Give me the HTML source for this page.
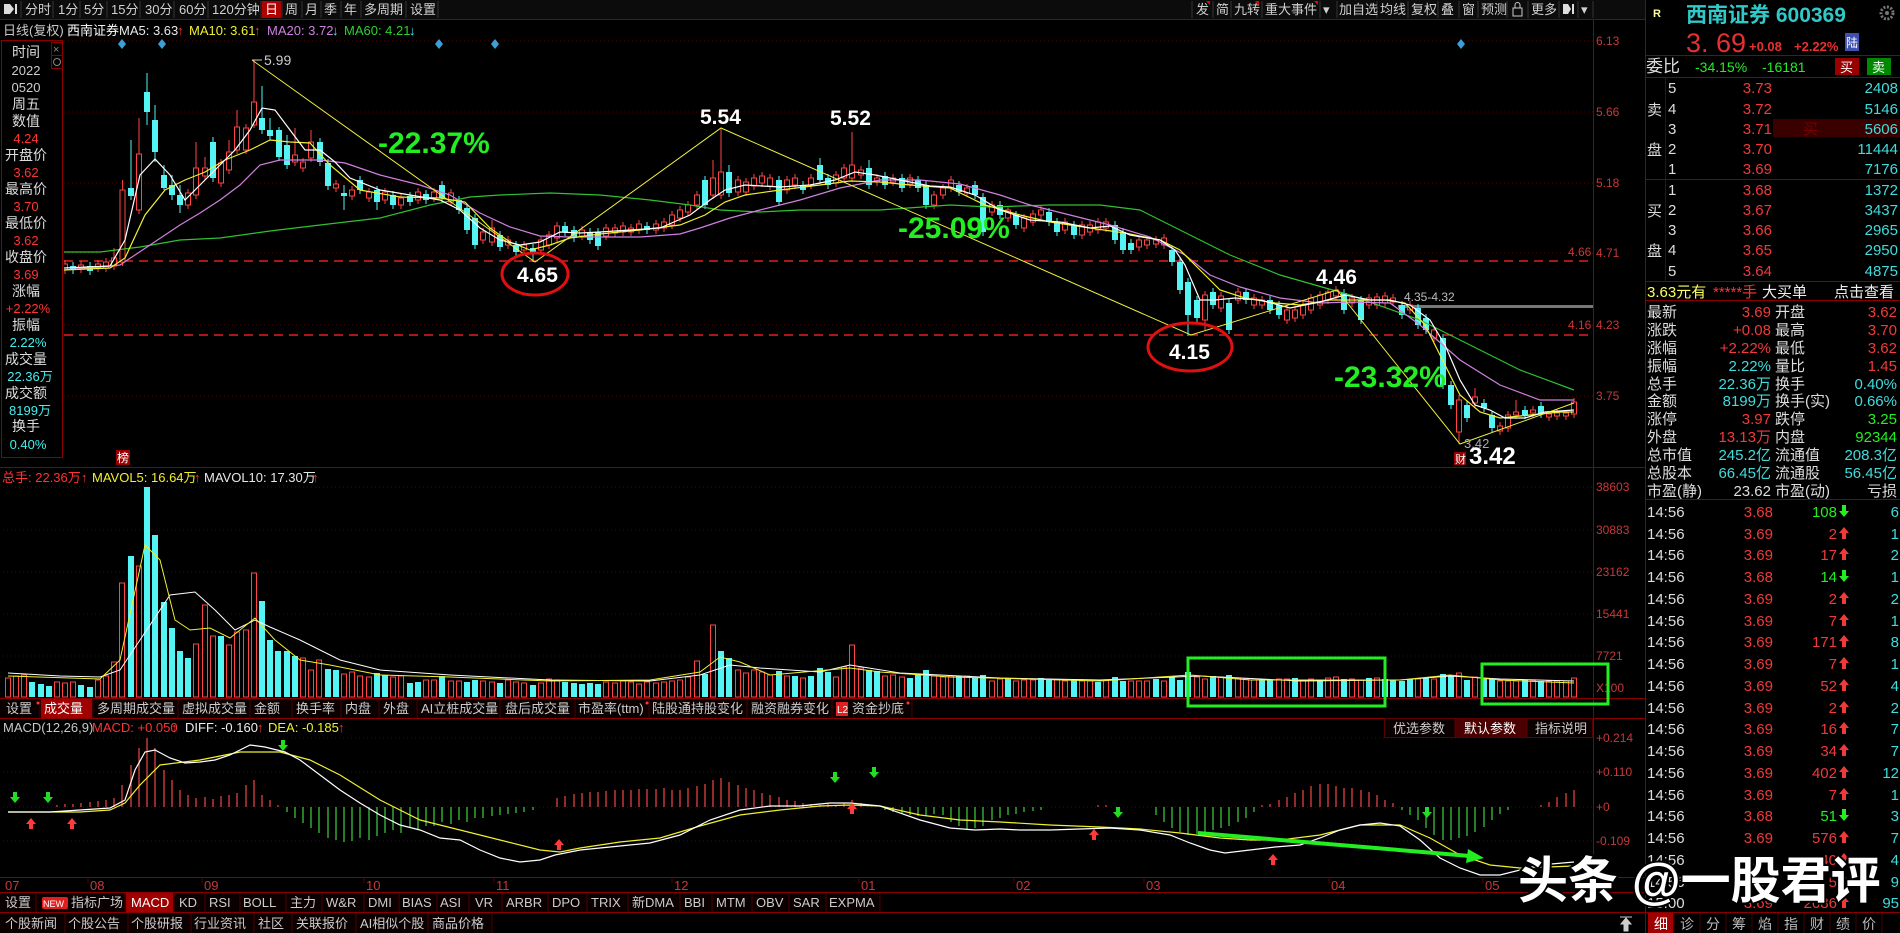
<!DOCTYPE html>
<html><head><meta charset="utf-8">
<style>
html,body{margin:0;padding:0;background:#000;overflow:hidden}
svg{display:block}
text{font-family:"Liberation Sans","Noto Sans CJK SC",sans-serif}
</style></head>
<body>
<svg width="1900" height="933" viewBox="0 0 1900 933" xmlns="http://www.w3.org/2000/svg">
<defs>
<clipPath id="cm"><rect x="64" y="40" width="1529" height="427"/></clipPath>
</defs>
<rect width="1900" height="933" fill="#000"/>

<!-- toolbar -->
<g font-size="13" fill="#d0d0d0">
<rect x="0" y="0" width="1645" height="19" fill="#0c0c0c"/>
<path d="M4 4h6l4 5-4 5H4z" fill="#ddd"/><rect x="15" y="4" width="2" height="10" fill="#ddd"/>
<rect x="262" y="1" width="19" height="17" fill="#b00000"/>
<g stroke="#333"><path d="M21 1v17M53 1v17M80 1v17M107 1v17M140 1v17M174 1v17M208 1v17M261 1v17M282 1v17M302 1v17M321 1v17M341 1v17M361 1v17M406 1v17M438 1v17"/>
<path d="M1192 1v17M1213 1v17M1231 1v17M1262 1v17M1320 1v17M1337 1v17M1377 1v17M1408 1v17M1438 1v17M1459 1v17M1478 1v17M1507 1v17M1528 1v17M1559 1v17M1578 1v17M1593 1v17"/></g>
<text x="25" y="14">分时</text><text x="58" y="14">1分</text><text x="84" y="14">5分</text><text x="111" y="14">15分</text><text x="145" y="14">30分</text><text x="179" y="14">60分</text><text x="212" y="14">120分钟</text>
<text x="265" y="14" fill="#fff">日</text><text x="285" y="14">周</text><text x="305" y="14">月</text><text x="324" y="14">季</text><text x="344" y="14">年</text><text x="364" y="14">多周期</text><text x="410" y="14">设置</text>
<text x="1196" y="14">发</text><text x="1216" y="14">简</text><text x="1234" y="14">九转</text><text x="1265" y="14">重大事件</text><text x="1323" y="14">▾</text>
<text x="1339" y="14">加自选</text><text x="1380" y="14">均线</text><text x="1411" y="14">复权</text><text x="1441" y="14">叠</text><text x="1462" y="14">窗</text><text x="1481" y="14">预测</text>
<rect x="1513" y="8" width="9" height="8" fill="none" stroke="#ccc"/><path d="M1515 8v-3a2.5 2.5 0 0 1 5 0v3" fill="none" stroke="#ccc"/>
<text x="1531" y="14">更多</text><path d="M1563 4h5l3 5-3 5h-5z" fill="#ddd"/><rect x="1572" y="4" width="2" height="10" fill="#ddd"/><text x="1581" y="14">▾</text>
<path d="M1210 1l-4 0 4 4z M1259 1l-4 0 4 4z M1318 1l-4 0 4 4z" fill="#e00"/>
</g>
<rect x="0" y="19" width="1645" height="1" fill="#8a0000"/>

<!-- info line -->
<g font-size="13">
<text x="3" y="35" fill="#c8c8c8">日线(复权)</text>
<text x="67" y="35" fill="#fff">西南证券</text>
<text x="119" y="35" fill="#e8e8e8">MA5: 3.63</text><text x="177" y="35" fill="#f33">↑</text>
<text x="189" y="35" fill="#f0f030">MA10: 3.61</text><text x="254" y="35" fill="#f33">↑</text>
<text x="267" y="35" fill="#d080e0">MA20: 3.72</text><text x="332" y="35" fill="#4ee">↓</text>
<text x="344" y="35" fill="#30d030">MA60: 4.21</text><text x="409" y="35" fill="#4ee">↓</text>
</g>

<!-- grids -->
<g stroke="#5a0000" stroke-dasharray="1 3">
<path d="M64 41H1593M64 112H1593M64 183H1593M64 253H1593M64 325H1593M64 396H1593"/>
<path d="M3 487H1593M3 530H1593M3 572H1593M3 614H1593M3 656H1593"/>
<path d="M3 738H1593M3 772H1593M3 807H1593M3 841H1593"/>
</g>
<path d="M64 261H1593M64 335H1593" stroke="#e02020" stroke-width="1.5" stroke-dasharray="9 6"/>
<rect x="1398" y="305" width="195" height="3" fill="#777"/>

<!-- candles -->
<g clip-path="url(#cm)">
<path fill="none" stroke="#ff4444" d="M65 260V274M81 261V273M98 260V272M106 258V272M114 248V270M122.6 180V266M139 118V214M188 189V209M196 142V199M205 157V180M221 159V187M229 140V174M237 110V154M246 124V154M254 60V128M295 128V166M303 158V172M311 130V162M336 180V192M352 186V200M369 188V202M385 188V204M401 194V209M418 188V204M434 188V202M451 189V206M483 228V244M492 220V246M508 236V249M524 241V254M541 236V254M549 231V249M557 222V242M582 226V240M606 224V240M615 224V237M623 222V236M631 224V236M639 220V234M656 220V234M664 218V232M672 211V229M680 206V222M688 201V216M697 191V209M713 160V199M721 129V199M738 176V196M746 178V196M754 174V190M762 172V187M770 174V190M787 176V194M795 174V189M811 174V189M836 171V187M844 164V182M852 132V182M861 166V179M877 174V186M893 174V186M910 174V188M934 191V209M943 184V199M951 176V192M967 184V197M992 201V216M1008 206V222M1024 214V232M1033 210V226M1041 206V219M1065 218V234M1082 221V239M1090 221V236M1098 218V234M1106 218V232M1139 236V251M1147 236V249M1156 236V248M1164 234V249M1205 291V330M1221 292V312M1238 288V304M1254 294V309M1262 296V309M1287 306V324M1295 306V322M1303 301V319M1311 294V314M1320 291V309M1328 288V304M1336 286V300M1352 294V307M1369 294V309M1377 293V309M1385 292V307M1393 294V306M1410 301V314M1434 326V342M1459 395V444M1475 388V407M1500 422V435M1508 411V432M1516 400V419M1533 406V417M1549 411V421M1557 409V420M1566 410V420M1574 398V418"/>
<path fill="none" stroke="#54f4f4" d="M73 262V274M90 262V275M131 140V200M147 73V125M155 105V162M164 165V190M172 175V200M180 185V213M213 137V182M262 86V134M270 118V140M279 127V161M287 135V169M320 138V166M328 159V190M344 185V210M360 176V194M377 186V210M393 191V209M410 192V206M426 190V204M442 181V202M459 196V214M467 204V234M475 214V249M500 231V251M516 241V256M533 244V262M565 222V236M574 226V242M590 228V244M598 228V250M647 222V234M705 176V209M729 165V197M779 176V206M803 181V194M820 158V184M828 174V189M869 160V189M885 172V189M902 174V192M918 176V192M926 181V209M959 181V196M975 181V199M983 193V236M1000 201V219M1016 211V229M1049 208V226M1057 218V236M1074 221V239M1115 221V244M1123 228V254M1131 239V254M1172 246V266M1180 258V294M1188 278V336M1197 296V322M1213 288V309M1229 299V334M1246 288V304M1270 296V314M1279 301V319M1344 289V314M1361 296V324M1402 301V319M1418 304V329M1426 314V334M1443 334V389M1451 381V409M1467 401V422M1484 399V412M1492 411V432M1525 406V419M1541 402V418"/>
<path fill="#000" stroke="#ff4444" d="M62.5 264h5v6h-5zM78.5 265h5v4h-5zM95.5 264h5v4h-5zM103.5 262h5v6h-5zM111.5 258h5v8h-5zM120 190h5v72h-5zM136.5 154h5v56h-5zM185.5 193h5v12h-5zM193.5 168h5v27h-5zM202.5 168h5v8h-5zM218.5 163h5v20h-5zM226.5 152h5v18h-5zM234.5 127h5v23h-5zM243.5 128h5v22h-5zM251.5 102h5v23h-5zM292.5 155h5v7h-5zM300.5 162h5v6h-5zM308.5 142h5v16h-5zM333.5 184h5v4h-5zM349.5 190h5v6h-5zM366.5 192h5v6h-5zM382.5 192h5v8h-5zM398.5 198h5v7h-5zM415.5 192h5v8h-5zM431.5 192h5v6h-5zM448.5 193h5v9h-5zM480.5 232h5v8h-5zM489.5 228h5v14h-5zM505.5 240h5v5h-5zM521.5 245h5v5h-5zM538.5 240h5v10h-5zM546.5 235h5v10h-5zM554.5 226h5v12h-5zM579.5 230h5v6h-5zM603.5 228h5v8h-5zM612.5 228h5v5h-5zM620.5 226h5v6h-5zM628.5 228h5v4h-5zM636.5 224h5v6h-5zM653.5 224h5v6h-5zM661.5 222h5v6h-5zM669.5 215h5v10h-5zM677.5 210h5v8h-5zM685.5 205h5v7h-5zM694.5 195h5v10h-5zM710.5 178h5v17h-5zM718.5 172h5v23h-5zM735.5 180h5v12h-5zM743.5 182h5v10h-5zM751.5 178h5v8h-5zM759.5 176h5v7h-5zM767.5 178h5v8h-5zM784.5 180h5v10h-5zM792.5 178h5v7h-5zM808.5 178h5v7h-5zM833.5 175h5v8h-5zM841.5 168h5v10h-5zM849.5 165h5v13h-5zM858.5 170h5v5h-5zM874.5 178h5v4h-5zM890.5 178h5v4h-5zM907.5 178h5v6h-5zM931.5 195h5v10h-5zM940.5 188h5v7h-5zM948.5 180h5v8h-5zM964.5 188h5v5h-5zM989.5 205h5v7h-5zM1005.5 210h5v8h-5zM1021.5 218h5v10h-5zM1030.5 214h5v8h-5zM1038.5 210h5v5h-5zM1062.5 222h5v8h-5zM1079.5 225h5v10h-5zM1087.5 225h5v7h-5zM1095.5 222h5v8h-5zM1103.5 222h5v6h-5zM1136.5 240h5v7h-5zM1144.5 240h5v5h-5zM1153.5 240h5v4h-5zM1161.5 238h5v7h-5zM1202.5 295h5v25h-5zM1218.5 296h5v12h-5zM1235.5 292h5v8h-5zM1251.5 298h5v7h-5zM1259.5 300h5v5h-5zM1284.5 310h5v10h-5zM1292.5 310h5v8h-5zM1300.5 305h5v10h-5zM1308.5 298h5v12h-5zM1317.5 295h5v10h-5zM1325.5 292h5v8h-5zM1333.5 290h5v6h-5zM1349.5 298h5v5h-5zM1366.5 298h5v7h-5zM1374.5 297h5v8h-5zM1382.5 296h5v7h-5zM1390.5 298h5v4h-5zM1407.5 305h5v5h-5zM1431.5 330h5v8h-5zM1456.5 400h5v32h-5zM1472.5 397h5v6h-5zM1497.5 426h5v5h-5zM1505.5 415h5v13h-5zM1513.5 412h5v3h-5zM1530.5 410h5v3h-5zM1546.5 414h5v3h-5zM1554.5 413h5v3h-5zM1563.5 413h5v3h-5zM1571.5 402h5v12h-5z"/>
<path fill="#54f4f4" d="M70 266h6v4h-6zM87 266h6v5h-6zM128 188h6v8h-6zM144 92h6v20h-6zM152 120h6v32h-6zM161 175h6v13h-6zM169 185h6v10h-6zM177 195h6v10h-6zM210 142h6v36h-6zM259 118h6v12h-6zM267 130h6v6h-6zM276 130h6v27h-6zM284 145h6v20h-6zM317 142h6v20h-6zM325 163h6v23h-6zM341 193h6v3h-6zM357 180h6v10h-6zM374 190h6v12h-6zM390 195h6v10h-6zM407 196h6v6h-6zM423 194h6v6h-6zM439 185h6v13h-6zM456 200h6v10h-6zM464 208h6v22h-6zM472 218h6v27h-6zM497 235h6v12h-6zM513 245h6v7h-6zM530 248h6v5h-6zM562 226h6v6h-6zM571 230h6v8h-6zM587 232h6v8h-6zM595 232h6v14h-6zM644 226h6v4h-6zM702 180h6v25h-6zM726 172h6v21h-6zM776 180h6v22h-6zM800 185h6v5h-6zM817 165h6v15h-6zM825 178h6v7h-6zM866 168h6v17h-6zM882 176h6v9h-6zM899 178h6v10h-6zM915 180h6v8h-6zM923 185h6v20h-6zM956 185h6v7h-6zM972 185h6v10h-6zM980 197h6v35h-6zM997 205h6v10h-6zM1013 215h6v10h-6zM1046 212h6v10h-6zM1054 222h6v10h-6zM1071 225h6v10h-6zM1112 225h6v15h-6zM1120 232h6v18h-6zM1128 243h6v7h-6zM1169 250h6v12h-6zM1177 262h6v28h-6zM1185 282h6v33h-6zM1194 300h6v18h-6zM1210 292h6v13h-6zM1226 303h6v27h-6zM1243 292h6v8h-6zM1267 300h6v10h-6zM1276 305h6v10h-6zM1341 293h6v17h-6zM1358 300h6v20h-6zM1399 305h6v10h-6zM1415 308h6v17h-6zM1423 318h6v12h-6zM1440 338h6v47h-6zM1448 385h6v20h-6zM1464 405h6v13h-6zM1481 403h6v5h-6zM1489 415h6v13h-6zM1522 410h6v5h-6zM1538 406h6v8h-6z"/>
<!-- MA lines -->
<polyline fill="none" stroke="#30c030" stroke-width="1.2" points="64,252 100,252 140,247 180,240 220,238 270,231 320,225 380,218 430,205 470,197 500,195 550,193 600,195 650,200 690,205 720,210 760,212 800,210 880,210 950,205 990,207 1050,205 1100,205 1140,210 1180,230 1230,255 1280,275 1350,295 1420,320 1470,345 1520,370 1574,390"/>
<polyline fill="none" stroke="#d080e0" stroke-width="1.2" points="64,270 120,265 150,245 180,225 200,213 220,200 240,185 260,165 280,160 300,160 320,160 345,163 380,175 420,185 450,195 480,213 510,227 540,236 570,237 600,237 640,237 680,234 700,228 730,218 760,210 800,200 840,188 880,180 920,180 960,184 1000,195 1030,205 1070,215 1110,225 1150,237 1185,255 1210,275 1240,287 1280,298 1320,303 1350,302 1390,303 1420,325 1460,360 1500,385 1540,400 1574,400"/>
<polyline fill="none" stroke="#f0f030" stroke-width="1.2" points="64,270 110,268 125,258 145,215 165,190 185,180 205,172 225,160 250,150 270,140 290,142 310,143 330,165 360,190 400,197 440,198 465,202 490,228 510,242 530,250 550,245 570,238 600,234 640,230 680,225 705,215 725,202 745,195 780,190 820,185 850,181 880,182 910,185 950,188 985,205 1020,215 1050,222 1090,228 1125,233 1160,240 1180,250 1200,270 1220,290 1245,298 1275,303 1300,305 1330,300 1360,300 1385,300 1405,303 1425,325 1445,365 1460,395 1480,412 1500,418 1530,415 1560,412 1574,412"/>
<polyline fill="none" stroke="#ffffff" stroke-width="1.2" points="64,268 110,266 125,240 140,175 155,159 170,175 185,200 200,185 215,170 235,150 250,130 262,108 275,110 290,130 305,150 320,150 335,162 350,178 380,190 410,195 440,200 460,210 480,228 500,240 520,245 540,242 560,232 580,233 600,232 630,230 660,228 690,215 710,200 725,190 745,185 780,187 810,185 835,180 855,172 875,175 900,180 930,186 950,187 975,195 1000,210 1030,220 1060,222 1090,228 1110,226 1130,235 1160,240 1175,250 1185,265 1200,300 1215,300 1235,298 1260,300 1290,308 1320,302 1345,295 1370,300 1390,300 1410,305 1430,320 1445,345 1460,380 1475,405 1490,410 1505,418 1525,418 1545,412 1574,410"/>
</g>

<!-- volume -->
<path fill="#000" stroke="#ff4444" d="M5.5 678h5V697h-5zM13.5 676h5V697h-5zM21.5 675h5V697h-5zM54.5 682h5V697h-5zM62.5 683h5V697h-5zM70.5 682h5V697h-5zM95.5 680h5V697h-5zM103.5 676h5V697h-5zM111.5 662h5V697h-5zM119.5 583h5V697h-5zM136.5 566h5V697h-5zM193.5 644h5V697h-5zM202.5 605h5V697h-5zM210.5 636h5V697h-5zM226.5 645h5V697h-5zM234.5 632h5V697h-5zM243.5 630h5V697h-5zM251.5 573h5V697h-5zM300.5 658h5V697h-5zM308.5 670h5V697h-5zM316.5 660h5V697h-5zM341.5 674h5V697h-5zM349.5 672h5V697h-5zM357.5 676h5V697h-5zM366.5 677h5V697h-5zM390.5 677h5V697h-5zM398.5 676h5V697h-5zM423.5 680h5V697h-5zM431.5 680h5V697h-5zM448.5 681h5V697h-5zM456.5 681h5V697h-5zM480.5 681h5V697h-5zM489.5 682h5V697h-5zM505.5 680h5V697h-5zM513.5 682h5V697h-5zM521.5 683h5V697h-5zM538.5 683h5V697h-5zM546.5 679h5V697h-5zM554.5 680h5V697h-5zM603.5 682h5V697h-5zM612.5 683h5V697h-5zM620.5 681h5V697h-5zM628.5 682h5V697h-5zM636.5 684h5V697h-5zM644.5 682h5V697h-5zM653.5 683h5V697h-5zM661.5 682h5V697h-5zM669.5 681h5V697h-5zM677.5 680h5V697h-5zM685.5 677h5V697h-5zM694.5 661h5V697h-5zM710.5 625h5V697h-5zM735.5 670h5V697h-5zM743.5 673h5V697h-5zM751.5 670h5V697h-5zM759.5 672h5V697h-5zM767.5 675h5V697h-5zM784.5 676h5V697h-5zM800.5 678h5V697h-5zM833.5 677h5V697h-5zM841.5 667h5V697h-5zM849.5 645h5V697h-5zM858.5 668h5V697h-5zM882.5 676h5V697h-5zM890.5 675h5V697h-5zM899.5 677h5V697h-5zM931.5 676h5V697h-5zM940.5 677h5V697h-5zM948.5 676h5V697h-5zM964.5 676h5V697h-5zM989.5 681h5V697h-5zM997.5 679h5V697h-5zM1013.5 681h5V697h-5zM1021.5 680h5V697h-5zM1030.5 680h5V697h-5zM1054.5 680h5V697h-5zM1062.5 681h5V697h-5zM1079.5 681h5V697h-5zM1087.5 681h5V697h-5zM1103.5 680h5V697h-5zM1128.5 681h5V697h-5zM1136.5 681h5V697h-5zM1144.5 681h5V697h-5zM1161.5 681h5V697h-5zM1194.5 677h5V697h-5zM1202.5 679h5V697h-5zM1218.5 677h5V697h-5zM1235.5 678h5V697h-5zM1243.5 679h5V697h-5zM1251.5 680h5V697h-5zM1276.5 679h5V697h-5zM1284.5 679h5V697h-5zM1300.5 680h5V697h-5zM1308.5 679h5V697h-5zM1325.5 678h5V697h-5zM1333.5 677h5V697h-5zM1349.5 679h5V697h-5zM1358.5 680h5V697h-5zM1374.5 678h5V697h-5zM1415.5 679h5V697h-5zM1431.5 679h5V697h-5zM1456.5 673h5V697h-5zM1472.5 677h5V697h-5zM1497.5 681h5V697h-5zM1505.5 681h5V697h-5zM1513.5 681h5V697h-5zM1530.5 681h5V697h-5zM1546.5 681h5V697h-5zM1554.5 681h5V697h-5zM1563.5 681h5V697h-5zM1571.5 678h5V697h-5z"/>
<path fill="#54f4f4" d="M29 682h6V697h-6zM38 684h6V697h-6zM46 686h6V697h-6zM78 685h6V697h-6zM87 687h6V697h-6zM128 556h6V697h-6zM144 487h6V697h-6zM152 535h6V697h-6zM161 602h6V697h-6zM169 628h6V697h-6zM177 651h6V697h-6zM185 658h6V697h-6zM218 636h6V697h-6zM259 601h6V697h-6zM267 640h6V697h-6zM275 651h6V697h-6zM284 651h6V697h-6zM292 656h6V697h-6zM325 669h6V697h-6zM333 670h6V697h-6zM374 673h6V697h-6zM382 675h6V697h-6zM407 683h6V697h-6zM415 682h6V697h-6zM439 676h6V697h-6zM464 682h6V697h-6zM472 680h6V697h-6zM497 683h6V697h-6zM530 685h6V697h-6zM562 682h6V697h-6zM571 683h6V697h-6zM579 684h6V697h-6zM587 683h6V697h-6zM595 684h6V697h-6zM702 674h6V697h-6zM718 651h6V697h-6zM726 658h6V697h-6zM776 671h6V697h-6zM792 676h6V697h-6zM808 676h6V697h-6zM817 668h6V697h-6zM825 672h6V697h-6zM866 670h6V697h-6zM874 671h6V697h-6zM907 678h6V697h-6zM915 674h6V697h-6zM923 670h6V697h-6zM956 676h6V697h-6zM972 678h6V697h-6zM980 675h6V697h-6zM1005 678h6V697h-6zM1038 678h6V697h-6zM1046 679h6V697h-6zM1071 680h6V697h-6zM1095 682h6V697h-6zM1112 677h6V697h-6zM1120 681h6V697h-6zM1153 679h6V697h-6zM1169 677h6V697h-6zM1177 680h6V697h-6zM1185 672h6V697h-6zM1210 676h6V697h-6zM1226 675h6V697h-6zM1259 680h6V697h-6zM1267 680h6V697h-6zM1292 678h6V697h-6zM1317 680h6V697h-6zM1341 679h6V697h-6zM1366 678h6V697h-6zM1382 679h6V697h-6zM1390 680h6V697h-6zM1399 681h6V697h-6zM1407 679h6V697h-6zM1423 678h6V697h-6zM1440 674h6V697h-6zM1448 676h6V697h-6zM1464 680h6V697h-6zM1481 678h6V697h-6zM1489 679h6V697h-6zM1522 680h6V697h-6zM1538 681h6V697h-6z"/>
<polyline fill="none" stroke="#ffffff" points="8,673 60,676 100,677 120,670 140,640 170,595 195,592 215,610 235,630 255,620 270,627 300,640 340,660 380,670 450,675 550,680 650,681 700,675 730,665 760,668 820,672 850,665 900,673 1000,678 1100,680 1200,676 1300,681 1400,680 1450,676 1500,679 1574,681"/>
<polyline fill="none" stroke="#f0f030" points="8,676 100,679 120,660 145,545 160,560 175,620 190,630 210,628 230,638 255,618 275,640 300,660 330,665 380,675 450,677 550,681 650,680 700,672 720,657 740,662 770,675 850,668 880,672 950,677 1100,681 1190,675 1250,680 1400,680 1450,675 1500,680 1574,683"/>

<!-- MACD -->
<path stroke="#e04040" stroke-width="1.3" d="M57 807V805M65 807V804M73 807V804M81 807V803M90 807V802M98 807V801M106 807V800M114 807V798M122 807V785M131 807V765M139 807V748M147 807V738M155 807V748M164 807V770M172 807V780M180 807V790M188 807V795M196 807V798M205 807V797M213 807V799M221 807V796M229 807V795M237 807V793M246 807V785M254 807V780M262 807V795M270 807V800M278 807V805M557 807V798M565 807V796M574 807V794M582 807V793M590 807V792M598 807V792M606 807V791M615 807V790M623 807V790M631 807V790M639 807V789M647 807V789M656 807V789M664 807V788M672 807V790M680 807V790M688 807V788M697 807V786M705 807V784M713 807V780M721 807V778M729 807V782M738 807V785M746 807V788M754 807V790M762 807V793M770 807V795M779 807V797M787 807V800M795 807V801M803 807V803M811 807V804M820 807V805M828 807V804M836 807V805M844 807V803M852 807V800M861 807V803M1098 807V805M1106 807V805M1262 807V805M1270 807V804M1279 807V800M1287 807V797M1295 807V793M1303 807V790M1311 807V786M1320 807V784M1328 807V784M1336 807V786M1344 807V788M1352 807V788M1361 807V790M1369 807V792M1377 807V795M1385 807V800M1393 807V803M1541 807V805M1549 807V802M1557 807V797M1566 807V793M1574 807V790"/>
<path stroke="#3cc03c" stroke-width="1.3" d="M287 807V812M295 807V818M303 807V823M311 807V828M319 807V833M328 807V838M336 807V840M344 807V842M352 807V841M360 807V838M369 807V840M377 807V836M385 807V833M393 807V830M401 807V833M410 807V828M418 807V830M426 807V826M434 807V826M442 807V822M451 807V824M459 807V820M467 807V822M475 807V818M483 807V818M492 807V816M500 807V815M508 807V814M516 807V813M524 807V812M533 807V810M885 807V810M893 807V812M902 807V814M910 807V815M918 807V816M926 807V816M934 807V814M943 807V815M951 807V822M959 807V826M967 807V830M975 807V828M983 807V826M992 807V820M1000 807V818M1008 807V815M1016 807V814M1024 807V812M1033 807V811M1041 807V810M1156 807V815M1164 807V822M1172 807V828M1180 807V832M1188 807V835M1197 807V834M1205 807V833M1213 807V830M1221 807V828M1229 807V826M1238 807V822M1246 807V818M1254 807V812M1402 807V810M1410 807V815M1418 807V820M1426 807V828M1434 807V835M1443 807V840M1451 807V840M1459 807V838M1467 807V836M1475 807V832M1484 807V827M1492 807V820M1500 807V814M1508 807V810"/>
<polyline fill="none" stroke="#f0f030" stroke-width="1.2" points="8,812 80,812 110,810 125,803 140,785 160,765 200,760 240,752 280,752 310,760 340,775 380,800 420,820 460,830 500,840 540,850 560,852 580,848 620,842 660,838 700,826 740,815 780,810 820,806 850,805 880,806 920,815 960,820 1000,822 1050,825 1100,827 1140,829 1180,833 1220,838 1250,840 1280,840 1320,835 1360,825 1400,825 1430,838 1460,855 1490,865 1520,868 1574,866"/>
<polyline fill="none" stroke="#ffffff" stroke-width="1.2" points="8,812 50,812 80,810 110,808 125,800 135,770 145,752 155,750 170,758 185,763 200,762 215,760 230,755 250,745 265,747 285,752 300,760 320,775 340,790 360,803 380,815 400,825 420,830 440,838 460,840 480,850 500,858 520,862 540,860 555,855 580,850 610,847 650,843 680,835 710,820 740,810 770,806 800,806 830,803 850,803 880,806 920,820 950,828 975,830 1000,829 1020,830 1050,830 1080,829 1110,828 1140,830 1170,835 1190,843 1210,850 1225,853 1250,850 1275,847 1300,845 1320,838 1340,830 1360,825 1380,823 1400,826 1420,840 1440,858 1460,868 1480,875 1500,875 1520,870 1540,865 1574,862"/>
<g fill="#22dd22"><path d="M13 792h4v5h3l-5 6-5-6h3zM46 792h4v5h3l-5 6-5-6h3zM281 740h4v5h3l-5 6-5-6h3zM833 772h4v5h3l-5 6-5-6h3zM872 767h4v5h3l-5 6-5-6h3zM1116 807h4v5h3l-5 6-5-6h3zM1425 807h4v5h3l-5 6-5-6h3z"/></g>
<g fill="#ff3a3a"><path d="M29 829h4v-5h3l-5-6-5 6h3zM70 829h4v-5h3l-5-6-5 6h3zM557 850h4v-5h3l-5-6-5 6h3zM850 814h4v-5h3l-5-6-5 6h3zM1092 840h4v-5h3l-5-6-5 6h3zM1271 865h4v-5h3l-5-6-5 6h3z"/></g>
<path d="M1198 833L1470 856" stroke="#22ee22" stroke-width="4"/><path d="M1484 858l-16 -9 -2 14z" fill="#22ee22"/>

<!-- diamonds -->
<g fill="#3aa0d8"><path d="M122 39l4 5-4 5-4-5z M162 39l4 5-4 5-4-5z M439 39l4 5-4 5-4-5z M495 39l4 5-4 5-4-5z M1461 39l4 5-4 5-4-5z"/></g>

<!-- zigzag -->
<polyline points="252,60 535,262 721,128 1191,335 1337,290 1460,444 1574,403" fill="none" stroke="#f0f040" stroke-width="1"/>
<path d="M252 60h10" stroke="#ccc"/><text x="264" y="65" font-size="14" fill="#ccc">5.99</text>
<text x="1404" y="301" font-size="12" fill="#bbb">4.35-4.32</text>
<text x="1464" y="448" font-size="13" fill="#aaa">3.42</text>

<g font-weight="bold">
<text x="378" y="153" font-size="30" fill="#22ee22">-22.37%</text>
<text x="898" y="238" font-size="30" fill="#22ee22">-25.09%</text>
<text x="1334" y="387" font-size="30" fill="#22ee22">-23.32%</text>
<text x="700" y="124" font-size="21" fill="#fff">5.54</text>
<text x="830" y="125" font-size="21" fill="#fff">5.52</text>
<text x="1316" y="284" font-size="21" fill="#fff">4.46</text>
<text x="517" y="282" font-size="21" fill="#fff">4.65</text>
<text x="1169" y="359" font-size="21" fill="#fff">4.15</text>
<text x="1469" y="464" font-size="24" fill="#fff">3.42</text>
</g>
<ellipse cx="535" cy="274" rx="33" ry="21" fill="none" stroke="#e01010" stroke-width="3"/>
<ellipse cx="1190" cy="347" rx="42" ry="24" fill="none" stroke="#e01010" stroke-width="3"/>
<rect x="1454" y="452" width="12" height="13" fill="#900"/><text x="1455" y="463" font-size="11" fill="#fff">财</text>
<rect x="116" y="450" width="14" height="15" fill="#900"/><text x="117" y="462" font-size="12" fill="#fff">榜</text>

<!-- left panel -->
<rect x="1.5" y="40.5" width="61" height="417" fill="#000" stroke="#8a0000"/>
<rect x="51.5" y="42.5" width="11" height="13" fill="none" stroke="#8a0000"/><text x="53" y="53" font-size="11" fill="#888">×</text>
<rect x="51.5" y="55.5" width="11" height="13" fill="none" stroke="#8a0000"/><circle cx="57" cy="62" r="3.5" fill="none" stroke="#888"/>
<g font-size="14" text-anchor="middle">
<text x="26" y="57" fill="#ddd">时间</text><text x="26" y="75" fill="#ccc" font-size="13">2022</text><text x="26" y="92" fill="#ccc" font-size="13">0520</text>
<text x="26" y="109" fill="#ddd">周五</text><text x="26" y="126" fill="#ddd">数值</text><text x="26" y="143" fill="#f33" font-size="13">4.24</text>
<text x="26" y="160" fill="#ddd">开盘价</text><text x="26" y="177" fill="#f33" font-size="13">3.62</text>
<text x="26" y="194" fill="#ddd">最高价</text><text x="26" y="211" fill="#f33" font-size="13">3.70</text>
<text x="26" y="228" fill="#ddd">最低价</text><text x="26" y="245" fill="#f33" font-size="13">3.62</text>
<text x="26" y="262" fill="#ddd">收盘价</text><text x="26" y="279" fill="#f33" font-size="13">3.69</text>
<text x="26" y="296" fill="#ddd">涨幅</text><text x="28" y="313" fill="#f33" font-size="13">+2.22%</text>
<text x="26" y="330" fill="#ddd">振幅</text><text x="28" y="347" fill="#4ee" font-size="13">2.22%</text>
<text x="26" y="364" fill="#ddd">成交量</text><text x="30" y="381" fill="#4ee" font-size="13">22.36万</text>
<text x="26" y="398" fill="#ddd">成交额</text><text x="30" y="415" fill="#4ee" font-size="13">8199万</text>
<text x="26" y="431" fill="#ddd">换手</text><text x="28" y="449" fill="#4ee" font-size="13">0.40%</text>
</g>

<!-- separators -->
<rect x="1593" y="20" width="1" height="857" fill="#8a0000"/>
<rect x="0" y="467" width="1645" height="1" fill="#8a0000"/>
<rect x="0" y="698" width="1645" height="1" fill="#8a0000"/>
<rect x="0" y="718" width="1645" height="1" fill="#8a0000"/>
<rect x="0" y="877" width="1645" height="1" fill="#8a0000"/>
<rect x="0" y="892" width="1645" height="1" fill="#8a0000"/>
<rect x="0" y="912" width="1645" height="1" fill="#8a0000"/>
<rect x="1645" y="0" width="1" height="933" fill="#8a0000"/>
<g font-size="12" fill="#c83838">
<text x="1596" y="45">6.13</text><text x="1596" y="116">5.66</text><text x="1596" y="187">5.18</text><text x="1596" y="257">4.71</text><text x="1596" y="329">4.23</text><text x="1596" y="400">3.75</text>
<text x="1568" y="256">4.66</text><text x="1568" y="329">4.16</text>
<text x="1596" y="491">38603</text><text x="1596" y="534">30883</text><text x="1596" y="576">23162</text><text x="1596" y="618">15441</text><text x="1596" y="660">7721</text><text x="1596" y="692">X100</text>
<text x="1596" y="742">+0.214</text><text x="1596" y="776">+0.110</text><text x="1596" y="811">+0</text><text x="1596" y="845">-0.109</text>
</g>

<g font-size="13">
<text x="2" y="482" fill="#f33">总手: 22.36万</text><text x="81" y="482" fill="#f33">↑</text>
<text x="92" y="482" fill="#f0f030">MAVOL5: 16.64万</text><text x="194" y="482" fill="#f33">↑</text>
<text x="204" y="482" fill="#e8e8e8">MAVOL10: 17.30万</text><text x="312" y="482" fill="#f33">↑</text>
</g>

<rect x="1188" y="658" width="197" height="48" fill="none" stroke="#22ee22" stroke-width="3"/>
<rect x="1482" y="664" width="126" height="40" fill="none" stroke="#22ee22" stroke-width="3"/>

<!-- volume tabs -->
<g font-size="13" fill="#ccc">
<rect x="0" y="699" width="912" height="19" fill="#0a0000"/>
<rect x="41" y="699" width="51" height="19" fill="#a00000"/>
<g stroke="#4a0000"><path d="M40 699v19M93 699v19M178 699v19M250 699v19M292 699v19M341 699v19M379 699v19M417 699v19M500 699v19M575 699v19M649 699v19M747 699v19M832 699v19M912 699v19"/></g>
<text x="6" y="713">设置</text><circle cx="38" cy="703" r="1.5" fill="#f33"/>
<text x="44" y="713" fill="#fff">成交量</text><text x="97" y="713">多周期成交量</text><text x="182" y="713">虚拟成交量</text><text x="254" y="713">金额</text>
<text x="296" y="713">换手率</text><text x="345" y="713">内盘</text><text x="383" y="713">外盘</text><text x="421" y="713">AI立桩成交量</text><text x="505" y="713">盘后成交量</text>
<text x="578" y="713">市盈率(ttm)</text><circle cx="647" cy="703" r="1.5" fill="#f33"/><text x="652" y="713">陆股通持股变化</text><text x="751" y="713">融资融券变化</text>
<rect x="836" y="702" width="12" height="14" fill="#e02020"/><text x="837" y="713" font-size="10" fill="#fff">L2</text><text x="852" y="713">资金抄底</text><circle cx="908" cy="703" r="1.5" fill="#f33"/>
</g>

<g font-size="13">
<text x="3" y="732" fill="#c8c8c8">MACD(12,26,9)</text>
<text x="92" y="732" fill="#f33">MACD: +0.050</text><text x="171" y="732" fill="#f33">↑</text>
<text x="185" y="732" fill="#eee">DIFF: -0.160</text><text x="257" y="732" fill="#f33">↑</text>
<text x="268" y="732" fill="#f0f030">DEA: -0.185</text><text x="338" y="732" fill="#f33">↑</text>
</g>
<g font-size="13" fill="#ccc">
<rect x="1384.5" y="718.5" width="208" height="19" fill="#0a0000" stroke="#5a0000"/>
<rect x="1455" y="719" width="72" height="18" fill="#4a0000"/>
<path d="M1455 719v18M1527 719v18" stroke="#5a0000"/>
<text x="1393" y="733">优选参数</text><text x="1464" y="733" fill="#fff">默认参数</text><text x="1535" y="733">指标说明</text>
</g>

<g font-size="13" fill="#c83838">
<text x="5" y="890">07</text><text x="90" y="890">08</text><text x="204" y="890">09</text><text x="366" y="890">10</text><text x="496" y="890">11</text><text x="674" y="890">12</text><text x="861" y="890">01</text><text x="1016" y="890">02</text><text x="1146" y="890">03</text><text x="1331" y="890">04</text><text x="1485" y="890">05</text>
</g>
<g stroke="#5a0000"><path d="M88 877v6M202 877v6M364 877v6M494 877v6M672 877v6M859 877v6M1014 877v6M1144 877v6M1329 877v6M1483 877v6"/></g>

<g font-size="13" fill="#ccc">
<rect x="0" y="893" width="880" height="19" fill="#0a0000"/>
<rect x="126" y="893" width="47" height="19" fill="#a00000"/>
<g stroke="#4a0000"><path d="M36 893v19M125 893v19M174 893v19M205 893v19M240 893v19M286 893v19M322 893v19M364 893v19M399 893v19M437 893v19M469 893v19M502 893v19M548 893v19M587 893v19M628 893v19M680 893v19M712 893v19M752 893v19M789 893v19M826 893v19M880 893v19"/></g>
<text x="5" y="907">设置</text><rect x="42" y="897" width="26" height="12" rx="2" fill="#e02020"/><text x="43" y="907" font-size="9" fill="#fff">NEW</text><text x="71" y="907">指标广场</text>
<text x="131" y="907" fill="#fff">MACD</text><text x="179" y="907">KD</text><text x="209" y="907">RSI</text><text x="243" y="907">BOLL</text><text x="290" y="907">主力</text><text x="326" y="907">W&amp;R</text>
<text x="368" y="907">DMI</text><text x="402" y="907">BIAS</text><text x="440" y="907">ASI</text><text x="475" y="907">VR</text><text x="506" y="907">ARBR</text><text x="552" y="907">DPO</text><text x="591" y="907">TRIX</text>
<text x="632" y="907">新DMA</text><text x="684" y="907">BBI</text><text x="716" y="907">MTM</text><text x="756" y="907">OBV</text><text x="793" y="907">SAR</text><text x="829" y="907">EXPMA</text>
</g>
<g font-size="13" fill="#ccc">
<rect x="0" y="913" width="492" height="20" fill="#0a0000"/>
<g stroke="#4a0000"><path d="M65 913v20M128 913v20M191 913v20M254 913v20M292 913v20M356 913v20M428 913v20M492 913v20"/></g>
<text x="5" y="928">个股新闻</text><text x="68" y="928">个股公告</text><text x="131" y="928">个股研报</text><text x="194" y="928">行业资讯</text><text x="258" y="928">社区</text><text x="296" y="928">关联报价</text><text x="360" y="928">AI相似个股</text><text x="432" y="928">商品价格</text>
</g>
<path d="M1620 917h12M1626 918l-5 6h3v7h4v-7h3z" stroke="#ccc" fill="#ccc"/>

<!-- right panel -->
<text x="1653" y="17" font-size="11" fill="#ffffa0" font-weight="bold">R</text>
<text x="1686" y="22" font-size="21" fill="#30c8c8" font-weight="bold">西南证券 600369</text>
<circle cx="1887" cy="13" r="6" fill="none" stroke="#777" stroke-width="3" stroke-dasharray="2 1.5"/><circle cx="1887" cy="13" r="2" fill="#777"/>
<text x="1686" y="52" font-size="27" fill="#e83030">3. 69</text>
<text x="1749" y="51" font-size="13" fill="#e83030" font-weight="bold">+0.08</text>
<text x="1794" y="51" font-size="13" fill="#e83030" font-weight="bold">+2.22%</text>
<rect x="1845" y="33" width="14" height="18" fill="#4050b0"/><text x="1846" y="47" font-size="12" fill="#fff">陆</text>
<rect x="1646" y="55" width="254" height="1" fill="#8a0000"/>
<text x="1646" y="72" font-size="17" fill="#ddd">委比</text>
<text x="1695" y="72" font-size="14" fill="#2e2">-34.15%</text><text x="1762" y="72" font-size="14" fill="#2e2">-16181</text>
<rect x="1835" y="58" width="24" height="17" fill="#900"/><text x="1840" y="72" font-size="13" fill="#fff">买</text>
<rect x="1867" y="58" width="24" height="17" fill="#080"/><text x="1872" y="72" font-size="13" fill="#fff">卖</text>
<rect x="1646" y="77" width="254" height="1" fill="#8a0000"/>
<rect x="1665" y="78" width="1" height="203" fill="#5a0000"/>
<rect x="1773" y="119" width="127" height="18" fill="#3a0000"/><text x="1803" y="134" font-size="15" fill="#700">买</text>
<g font-size="15">
<text x="1647" y="115" fill="#ddd">卖</text><text x="1647" y="155" fill="#ddd">盘</text>
<text x="1647" y="216" fill="#ddd">买</text><text x="1647" y="256" fill="#ddd">盘</text>
<g fill="#ddd"><text x="1668" y="93">5</text><text x="1668" y="114">4</text><text x="1668" y="134">3</text><text x="1668" y="154">2</text><text x="1668" y="174">1</text>
<text x="1668" y="195">1</text><text x="1668" y="215">2</text><text x="1668" y="235">3</text><text x="1668" y="255">4</text><text x="1668" y="276">5</text></g>
<g fill="#f03a3a" text-anchor="end"><text x="1772" y="93">3.73</text><text x="1772" y="114">3.72</text><text x="1772" y="134">3.71</text><text x="1772" y="154">3.70</text><text x="1772" y="174">3.69</text>
<text x="1772" y="195">3.68</text><text x="1772" y="215">3.67</text><text x="1772" y="235">3.66</text><text x="1772" y="255">3.65</text><text x="1772" y="276">3.64</text></g>
<g fill="#40dcdc" text-anchor="end"><text x="1898" y="93">2408</text><text x="1898" y="114">5146</text><text x="1898" y="134">5606</text><text x="1898" y="154">11444</text><text x="1898" y="174">7176</text>
<text x="1898" y="195">1372</text><text x="1898" y="215">3437</text><text x="1898" y="235">2965</text><text x="1898" y="255">2950</text><text x="1898" y="276">4875</text></g>
</g>
<rect x="1646" y="179" width="254" height="1" fill="#8a0000"/>
<rect x="1646" y="281" width="254" height="1" fill="#8a0000"/>
<g font-size="15"><text x="1647" y="297" fill="#ffff60">3.63元有</text><text x="1713" y="297" fill="#f33">*****手</text><text x="1762" y="297" fill="#eee">大买单</text><text x="1834" y="297" fill="#eee">点击查看</text></g>
<rect x="1646" y="300" width="254" height="1" fill="#8a0000"/>
<g font-size="15">
<g fill="#ddd"><text x="1647" y="317">最新</text><text x="1647" y="335">涨跌</text><text x="1647" y="353">涨幅</text><text x="1647" y="371">振幅</text><text x="1647" y="389">总手</text><text x="1647" y="406">金额</text><text x="1647" y="424">涨停</text><text x="1647" y="442">外盘</text><text x="1647" y="460">总市值</text><text x="1647" y="478">总股本</text><text x="1647" y="496">市盈(静)</text>
<text x="1775" y="317">开盘</text><text x="1775" y="335">最高</text><text x="1775" y="353">最低</text><text x="1775" y="371">量比</text><text x="1775" y="389">换手</text><text x="1775" y="406">换手(实)</text><text x="1775" y="424">跌停</text><text x="1775" y="442">内盘</text><text x="1775" y="460">流通值</text><text x="1775" y="478">流通股</text><text x="1775" y="496">市盈(动)</text></g>
<g text-anchor="end">
<text x="1771" y="317" fill="#f03a3a">3.69</text><text x="1771" y="335" fill="#f03a3a">+0.08</text><text x="1771" y="353" fill="#f03a3a">+2.22%</text><text x="1771" y="371" fill="#40dcdc">2.22%</text><text x="1771" y="389" fill="#40dcdc">22.36万</text><text x="1771" y="406" fill="#40dcdc">8199万</text><text x="1771" y="424" fill="#f03a3a">3.97</text><text x="1771" y="442" fill="#f03a3a">13.13万</text><text x="1771" y="460" fill="#40dcdc">245.2亿</text><text x="1771" y="478" fill="#40dcdc">66.45亿</text><text x="1771" y="496" fill="#ddd">23.62</text>
<text x="1897" y="317" fill="#f03a3a">3.62</text><text x="1897" y="335" fill="#f03a3a">3.70</text><text x="1897" y="353" fill="#f03a3a">3.62</text><text x="1897" y="371" fill="#f03a3a">1.45</text><text x="1897" y="389" fill="#40dcdc">0.40%</text><text x="1897" y="406" fill="#40dcdc">0.66%</text><text x="1897" y="424" fill="#2e2">3.25</text><text x="1897" y="442" fill="#2e2">92344</text><text x="1897" y="460" fill="#40dcdc">208.3亿</text><text x="1897" y="478" fill="#40dcdc">56.45亿</text><text x="1897" y="496" fill="#ddd">亏损</text>
</g></g>
<rect x="1646" y="499" width="254" height="1" fill="#8a0000"/>

<!-- ticks -->
<g font-size="15">
<g fill="#ddd">
<text x="1647" y="517">14:56</text><text x="1647" y="539">14:56</text><text x="1647" y="560">14:56</text><text x="1647" y="582">14:56</text><text x="1647" y="604">14:56</text><text x="1647" y="626">14:56</text><text x="1647" y="647">14:56</text><text x="1647" y="669">14:56</text><text x="1647" y="691">14:56</text><text x="1647" y="713">14:56</text><text x="1647" y="734">14:56</text><text x="1647" y="756">14:56</text><text x="1647" y="778">14:56</text><text x="1647" y="800">14:56</text><text x="1647" y="821">14:56</text><text x="1647" y="843">14:56</text><text x="1647" y="865">14:56</text><text x="1647" y="887">14:56</text><text x="1647" y="908">15:00</text>
</g>
<g fill="#f03a3a" text-anchor="end">
<text x="1773" y="517">3.68</text><text x="1773" y="539">3.69</text><text x="1773" y="560">3.69</text><text x="1773" y="582">3.68</text><text x="1773" y="604">3.69</text><text x="1773" y="626">3.69</text><text x="1773" y="647">3.69</text><text x="1773" y="669">3.69</text><text x="1773" y="691">3.69</text><text x="1773" y="713">3.69</text><text x="1773" y="734">3.69</text><text x="1773" y="756">3.69</text><text x="1773" y="778">3.69</text><text x="1773" y="800">3.69</text><text x="1773" y="821">3.68</text><text x="1773" y="843">3.69</text><text x="1773" y="865">3.69</text><text x="1773" y="887">3.69</text><text x="1773" y="908">3.69</text>
</g>
<g text-anchor="end" fill="#f03a3a">
<text x="1837" y="517" fill="#2e2">108</text><text x="1837" y="539">2</text><text x="1837" y="560">17</text><text x="1837" y="582" fill="#2e2">14</text><text x="1837" y="604">2</text><text x="1837" y="626">7</text><text x="1837" y="647">171</text><text x="1837" y="669">7</text><text x="1837" y="691">52</text><text x="1837" y="713">2</text><text x="1837" y="734">16</text><text x="1837" y="756">34</text><text x="1837" y="778">402</text><text x="1837" y="800">7</text><text x="1837" y="821" fill="#2e2">51</text><text x="1837" y="843">576</text><text x="1837" y="865">40</text><text x="1837" y="887">5</text><text x="1837" y="908">2086</text>
</g>
<g text-anchor="end" fill="#40dcdc">
<text x="1899" y="517">6</text><text x="1899" y="539">1</text><text x="1899" y="560">2</text><text x="1899" y="582">1</text><text x="1899" y="604">2</text><text x="1899" y="626">1</text><text x="1899" y="647">8</text><text x="1899" y="669">1</text><text x="1899" y="691">4</text><text x="1899" y="713">2</text><text x="1899" y="734">7</text><text x="1899" y="756">7</text><text x="1899" y="778">12</text><text x="1899" y="800">1</text><text x="1899" y="821">3</text><text x="1899" y="843">7</text><text x="1899" y="865">4</text><text x="1899" y="887">9</text><text x="1899" y="908">95</text>
</g>
<g fill="#2e2"><path d="M1844 517l5-6h-3v-6h-4v6h-3zM1844 582l5-6h-3v-6h-4v6h-3zM1844 821l5-6h-3v-6h-4v6h-3z"/></g>
<g fill="#f03a3a"><path d="M1844 527l5 6h-3v6h-4v-6h-3zM1844 548l5 6h-3v6h-4v-6h-3zM1844 592l5 6h-3v6h-4v-6h-3zM1844 614l5 6h-3v6h-4v-6h-3zM1844 635l5 6h-3v6h-4v-6h-3zM1844 657l5 6h-3v6h-4v-6h-3zM1844 679l5 6h-3v6h-4v-6h-3zM1844 701l5 6h-3v6h-4v-6h-3zM1844 722l5 6h-3v6h-4v-6h-3zM1844 744l5 6h-3v6h-4v-6h-3zM1844 766l5 6h-3v6h-4v-6h-3zM1844 788l5 6h-3v6h-4v-6h-3zM1844 831l5 6h-3v6h-4v-6h-3zM1844 853l5 6h-3v6h-4v-6h-3zM1844 875l5 6h-3v6h-4v-6h-3zM1844 896l5 6h-3v6h-4v-6h-3z"/></g>
</g>

<rect x="1646" y="912" width="254" height="1" fill="#8a0000"/>
<rect x="1648" y="913" width="25" height="20" fill="#a00000"/>
<g font-size="14" fill="#bbb"><text x="1654" y="929" fill="#fff">细</text><text x="1680" y="929">诊</text><text x="1706" y="929">分</text><text x="1732" y="929">筹</text><text x="1758" y="929">焰</text><text x="1784" y="929">指</text><text x="1810" y="929">财</text><text x="1836" y="929">绩</text><text x="1862" y="929">价</text></g>
<g stroke="#4a0000"><path d="M1674 913v20M1700 913v20M1726 913v20M1752 913v20M1778 913v20M1804 913v20M1830 913v20M1856 913v20M1882 913v20"/></g>

<!-- watermark -->
<text x="1518" y="898" font-size="50" font-weight="bold" fill="#fff" stroke="#000" stroke-width="4" paint-order="stroke">头条 @一股君评</text>
</svg>
</body></html>
